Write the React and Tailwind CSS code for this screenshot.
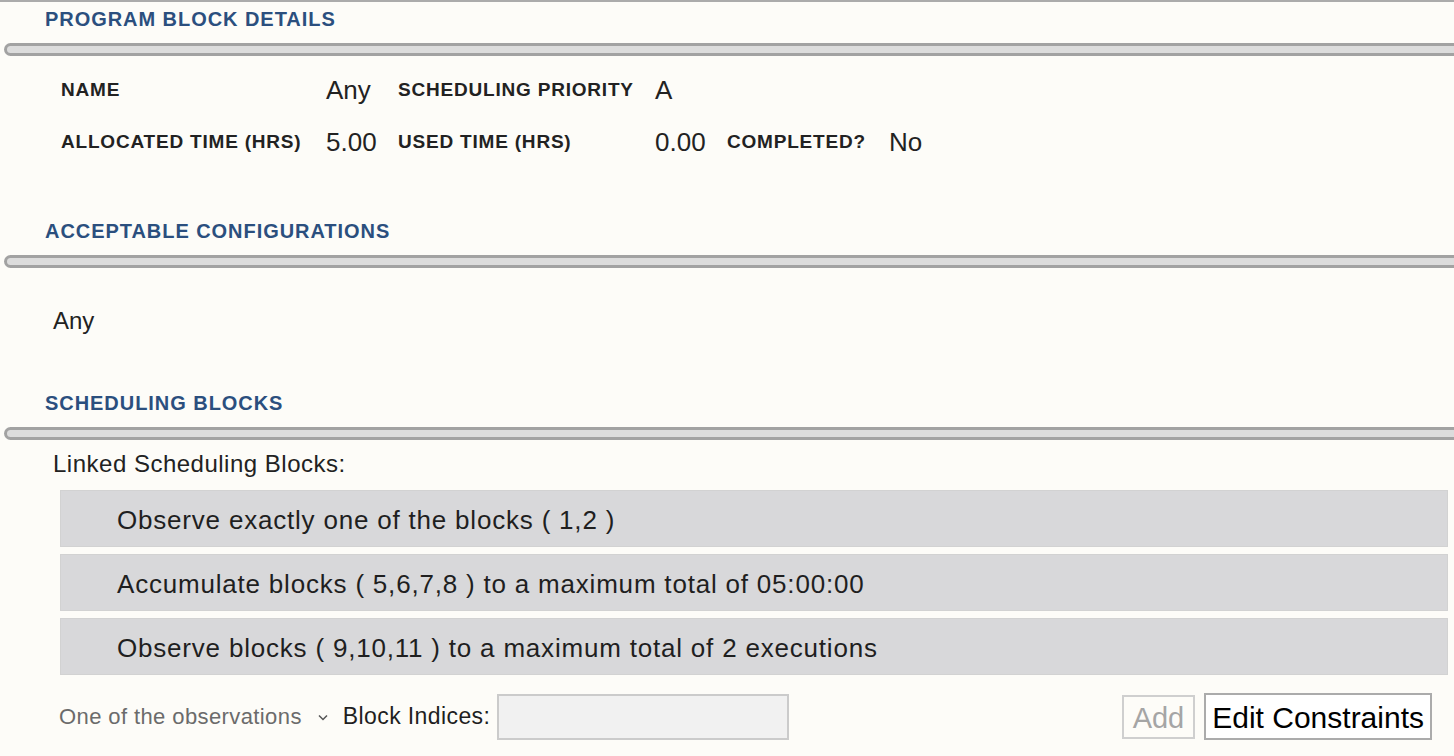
import React from 'react';

const SectionHeader = ({ title, className = '' }) => (
  <div className={className}>
    <h2 className="pl-[45px] text-[20px] leading-[24px] font-bold tracking-[0.95px] text-[#2b4f7e]">{title}</h2>
    <div className="mt-[12px] ml-[4px] h-[13px] border-[3px] border-r-0 border-[#a2a2a2] bg-[#dcdcdc] rounded-l-full" />
  </div>
);

const Label = ({ children }) => (
  <span className="text-[19px] font-bold tracking-[0.8px] text-[#222]">{children}</span>
);

const Value = ({ children }) => (
  <span className="text-[26px] text-[#222]">{children}</span>
);

const linkedBlocks = [
  'Observe exactly one of the blocks ( 1,2 )',
  'Accumulate blocks ( 5,6,7,8 ) to a maximum total of 05:00:00',
  'Observe blocks ( 9,10,11 ) to a maximum total of 2 executions',
];

const App = () => {
  return (
    <div className="min-h-screen bg-[#fdfcf8] border-t-2 border-[#ababab] font-['Liberation_Sans',Arial,sans-serif] text-[#222]">
      <SectionHeader title="PROGRAM BLOCK DETAILS" className="pt-[5px]" />

      {/* Details */}
      <div className="mt-[8px] pl-[61px] grid grid-cols-[265px_72px_257px_72px_162px_auto] auto-rows-[52px] items-center">
        <Label>NAME</Label>
        <Value>Any</Value>
        <Label>SCHEDULING PRIORITY</Label>
        <Value>A</Value>
        <span />
        <span />
        <Label>ALLOCATED TIME (HRS)</Label>
        <Value>5.00</Value>
        <Label>USED TIME (HRS)</Label>
        <Value>0.00</Value>
        <Label>COMPLETED?</Label>
        <Value>No</Value>
      </div>

      <SectionHeader title="ACCEPTABLE CONFIGURATIONS" className="mt-[51px]" />
      <div className="mt-[38px] pl-[53px] text-[24px] leading-[30px]">Any</div>

      <SectionHeader title="SCHEDULING BLOCKS" className="mt-[55px]" />
      <div className="mt-[10px] pl-[53px] text-[24px] leading-[28px] tracking-[0.5px]">Linked Scheduling Blocks:</div>

      <div className="mt-[12px] ml-[60px] mr-[6px] flex flex-col gap-[7px]">
        {linkedBlocks.map((text) => (
          <div
            key={text}
            className="h-[57px] flex items-center pl-[56px] pt-[3px] bg-[#d8d8da] border border-[#d2d2d2] text-[26px] tracking-[0.8px] text-[#1f1f1f]"
          >
            {text}
          </div>
        ))}
      </div>

      {/* Add constraint row */}
      <div className="mt-[18px] flex items-center pr-[22px]">
        <div className="pl-[59px] flex items-center text-[22px] tracking-[0.4px] text-[#6b6b6b]">
          One of the observations
          <svg className="ml-[15px] w-[12px] h-[12px]" viewBox="0 0 12 12" fill="none" stroke="#555" strokeWidth="1.5">
            <path d="M2 4.5 L6 8.5 L10 4.5" />
          </svg>
        </div>
        <span className="ml-[14px] text-[23px] tracking-[0.4px] text-[#1f1f1f]">Block Indices:</span>
        <div className="ml-[7px] w-[292px] h-[46px] bg-[#f1f1f1] border-2 border-[#cbcbcb]" />
        <div className="ml-auto flex items-center gap-[9px]">
          <button className="h-[44px] px-[9px] border-2 border-[#cfcfcf] bg-[#fdfcf8] text-[29px] text-[#a5a5a5]">Add</button>
          <button className="h-[47px] px-[6px] border-2 border-[#ababab] bg-white text-[30px] text-black">Edit Constraints</button>
        </div>
      </div>
    </div>
  );
};

export default App;
